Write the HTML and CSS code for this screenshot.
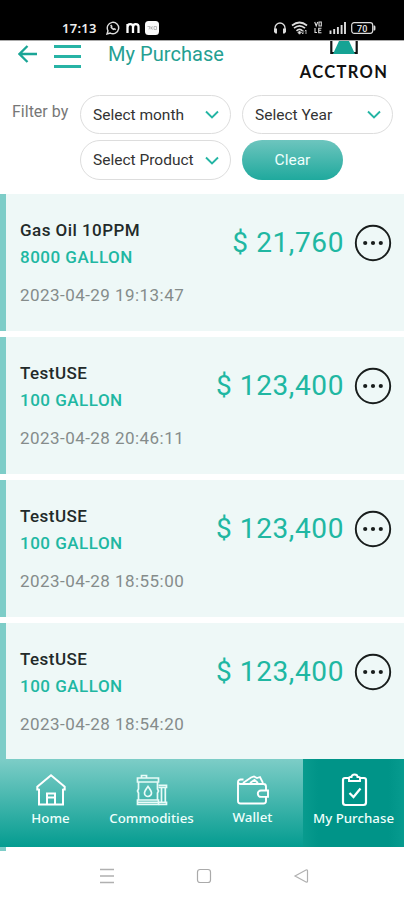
FILE: index.html
```html
<!DOCTYPE html>
<html lang="en">
<head>
<meta charset="utf-8">
<title>My Purchase</title>
<link rel="stylesheet" href="styles.css">
</head>
<body>
<div class="status">
  <span class="time">17:13</span>
  <svg class="whatsapp" width="14" height="14" viewBox="0 0 14 14"><path d="M1 13l1-3.200A5.700 5.700 0 1 1 4.200 12z" fill="none" stroke="#ddd" stroke-width="1.400"/><path d="M4.700 4l1 1.400-.5.8c.5 1 1.200 1.700 2.300 2.200l.8-.6 1.500.9" fill="none" stroke="#ddd" stroke-width="1.500"/></svg>
  <svg class="m-icon" width="14" height="12" viewBox="0 0 14 12"><path d="M1.500 11V2M1.500 5.500Q1.500 2.200 4.300 2.200T7 5V11M7 5.500Q7 2.200 9.800 2.200T12.500 5V11" fill="none" stroke="#fff" stroke-width="2.300"/></svg>
  <svg class="app-icon" width="14" height="14" viewBox="0 0 14 14"><rect width="14" height="14" rx="3.500" fill="#fafafa"/><path d="M2.500 5.500h2.500l-1 3M6 5.500v3M8 5.500L6 7l2 1.500M9 5.500h2.500v3H9z" fill="none" stroke="#aaa" stroke-width=".8"/></svg>
  <span class="spacer"></span>
  <svg class="phones" width="14" height="12" viewBox="0 0 14 12"><path d="M2 8V6a5 5 0 0 1 10 0v2" fill="none" stroke="#ddd" stroke-width="1.300"/><path d="M1 6.500h3v5H2.500L1 10zM10 6.500h3V10l-1.500 1.500H10z" fill="#ddd"/></svg>
  <svg class="wifi" width="17" height="14" viewBox="0 0 17 14"><path d="M1 4.500Q8.500-1.500 16 4.500M3 7.200Q8.500 2.500 14 7.200M5.500 9.800Q8.500 7 11.500 9.800" fill="none" stroke="#ddd" stroke-width="1.700"/><path d="M7 11.500l1.500-1.500 1.500 1.500-1.500 1.700zM12 9v4M10.500 11.500l1.500 1.500M15 13V9M13.800 10.200L15 9" fill="#ddd" stroke="#ddd" stroke-width=".8"/></svg>
  <svg class="volte" width="8" height="13" viewBox="0 0 8 13"><path d="M.7 1l1.500 4L3.700 1M5 1v4h2.300V1zM1 7v4.500h2M7.500 7.200H4.700v4.500h2.800M4.700 9.300h2.500" fill="none" stroke="#ddd" stroke-width="1.100"/></svg>
  <svg class="signal" width="17" height="12" viewBox="0 0 17 12"><path d="M1.500 8.500V12M5.200 7v5M8.900 5v7M12.600 3v9M16 0v12" stroke="#ddd" stroke-width="1.900"/></svg>
  <svg class="battery" width="25" height="12" viewBox="0 0 25 12"><rect x=".7" y=".7" width="21" height="10.600" rx="2.500" fill="none" stroke="#ddd" stroke-width="1.200"/><path d="M22.500 3.500h1.200q.8 0 .8 2.500t-.8 2.500h-1.200z" fill="#ddd"/><text class="charge" x="6" y="9.500">70</text></svg>
</div>

<header class="header">
  <svg class="back" width="20" height="18" viewBox="0 0 20 18"><path d="M9.500 1L1.500 9l8 8M2 9h17" fill="none" stroke="#1aa596" stroke-width="2.300"/></svg>
  <span class="burger"></span>
  <h1>My Purchase</h1>
  <div class="brand">
    <svg width="28" height="13" viewBox="0 0 28 13"><path d="M1.300 0v12h25.400V0" fill="none" stroke="#111" stroke-width="2.200"/><path d="M9 0h10l6 13H3z" fill="#16a394"/></svg>
    <span>ACCTRON</span>
  </div>
</header>

<section class="filters">
  <span class="label">Filter by</span>
  <div class="controls">
    <div class="select"><span>Select month</span><svg width="14" height="9" viewBox="0 0 14 9"><path d="M1 1.500l6 6 6-6" fill="none" stroke="#24b5a4" stroke-width="1.900"/></svg></div>
    <div class="select year"><span>Select Year</span><svg width="14" height="9" viewBox="0 0 14 9"><path d="M1 1.500l6 6 6-6" fill="none" stroke="#24b5a4" stroke-width="1.900"/></svg></div>
    <div class="select"><span>Select Product</span><svg width="14" height="9" viewBox="0 0 14 9"><path d="M1 1.500l6 6 6-6" fill="none" stroke="#24b5a4" stroke-width="1.900"/></svg></div>
    <button class="clear">Clear</button>
  </div>
</section>

<main class="list">
  <article class="card">
    <div class="info"><div class="name">Gas Oil 10PPM</div><div class="qty">8000 GALLON</div><div class="date">2023-04-29 19:13:47</div></div>
    <div class="price">$ 21,760</div>
    <svg class="more" width="38" height="38" viewBox="0 0 38 38"><circle cx="19" cy="19" r="17.200" fill="none" stroke="#181d1c" stroke-width="1.900"/><g fill="#181d1c"><circle cx="11.200" cy="19" r="2.100"/><circle cx="19" cy="19" r="2.100"/><circle cx="26.800" cy="19" r="2.100"/></g></svg>
  </article>
  <article class="card">
    <div class="info"><div class="name">TestUSE</div><div class="qty">100 GALLON</div><div class="date">2023-04-28 20:46:11</div></div>
    <div class="price">$ 123,400</div>
    <svg class="more" width="38" height="38" viewBox="0 0 38 38"><circle cx="19" cy="19" r="17.200" fill="none" stroke="#181d1c" stroke-width="1.900"/><g fill="#181d1c"><circle cx="11.200" cy="19" r="2.100"/><circle cx="19" cy="19" r="2.100"/><circle cx="26.800" cy="19" r="2.100"/></g></svg>
  </article>
  <article class="card">
    <div class="info"><div class="name">TestUSE</div><div class="qty">100 GALLON</div><div class="date">2023-04-28 18:55:00</div></div>
    <div class="price">$ 123,400</div>
    <svg class="more" width="38" height="38" viewBox="0 0 38 38"><circle cx="19" cy="19" r="17.200" fill="none" stroke="#181d1c" stroke-width="1.900"/><g fill="#181d1c"><circle cx="11.200" cy="19" r="2.100"/><circle cx="19" cy="19" r="2.100"/><circle cx="26.800" cy="19" r="2.100"/></g></svg>
  </article>
  <article class="card">
    <div class="info"><div class="name">TestUSE</div><div class="qty">100 GALLON</div><div class="date">2023-04-28 18:54:20</div></div>
    <div class="price">$ 123,400</div>
    <svg class="more" width="38" height="38" viewBox="0 0 38 38"><circle cx="19" cy="19" r="17.200" fill="none" stroke="#181d1c" stroke-width="1.900"/><g fill="#181d1c"><circle cx="11.200" cy="19" r="2.100"/><circle cx="19" cy="19" r="2.100"/><circle cx="26.800" cy="19" r="2.100"/></g></svg>
  </article>
</main>

<nav class="tabs">
  <a class="tab"><svg width="32" height="34" viewBox="0 0 32 34"><path d="M4 16v15.500h24V16M12 31V20.500h8V31M12 24.500h8M4.500 16.500H2.300v-2.700L16 2.300l13.700 11.500v2.700h-2.200" fill="none" stroke="#fff" stroke-width="2"/></svg><span>Home</span></a>
  <a class="tab"><svg width="32" height="34" viewBox="0 0 32 34"><g fill="none" stroke="#e8fbf8" stroke-width="1.700"><path d="M1.500 5h21v4h-21zM2.500 9v7l-1 2 1 2v7M21.500 9v7l1 2-1 2v7M1.500 27h21v4.500h-21zM1.500 29.300h21M5.500 5V2.500h5V5"/><path d="M12 13.500q-3.500 4.500-3.500 6.500a3.500 3.500 0 0 0 7 0q0-2-3.500-6.500z"/><path d="M22.500 12.300h8v2.200h-8M29.300 14.500V29M25.500 14.500V29M22.500 29.300h8v2.200h-8"/></g></svg><span>Commodities</span></a>
  <a class="tab wallet"><svg width="32" height="34" viewBox="0 0 32 34"><g fill="none" stroke="#fff" stroke-width="1.900"><path d="M29 17.500v-4q0-2.500-2.500-2.500H3.500Q1 11 1 9t2.500-2.500h3M1 9v19q0 2.500 2.500 2.500h23q2.500 0 2.500-2.500v-4"/><path d="M31 17.500h-7a3.200 3.200 0 0 0 0 6.400h7z"/><path d="M6 10l8-5.500 3-1 3 1.500 3-1 3 6M13 10l4.500-3 3.500 3" stroke-width="1.800"/></g></svg><span>Wallet</span></a>
  <a class="tab active"><svg width="32" height="34" viewBox="0 0 32 34"><g fill="none" stroke="#fff" stroke-width="2.200"><path d="M11 5H7Q5 5 5 7v22.500q0 2.500 2.500 2.500h18q2.500 0 2.500-2.500V7q0-2-2-2h-4"/><path d="M11 8V5q0-1 1.500-1h1q0-2.500 3-2.500t3 2.500h1Q22 4 22 5v3z" stroke-width="1.900"/><path d="M11.500 20l4 4 7-8.500"/></g></svg><span>My Purchase</span></a>
</nav>

<footer class="system">
  <svg width="16" height="16" viewBox="0 0 16 16"><path d="M1 1.500h14M1 8h14M1 14.500h14" stroke="#b0b0b0" stroke-width="1.300"/></svg>
  <svg width="16" height="16" viewBox="0 0 16 16"><rect x="1.500" y="1.500" width="13" height="13" rx="2.500" fill="none" stroke="#aaa" stroke-width="1.200"/></svg>
  <svg width="16" height="16" viewBox="0 0 16 16"><path d="M2 8L13 2q1.500-.5 1.500 1v10q0 1.500-1.500 1z" fill="none" stroke="#b0b0b0" stroke-width="1.200"/></svg>
</footer>
</body>
</html>
```
FILE: styles.css
```css
* { box-sizing: border-box; }
body { margin: 0; width: 404px; height: 900px; overflow: hidden; background: #fff; font-family: Roboto, "Liberation Sans", sans-serif; }
svg { display: block; flex: none; }

.status { display: flex; align-items: center; height: 40px; padding: 15px 28px 0 62px; background: #000; }
.time { width: 44px; font: 600 13px/16px "Noto Sans", sans-serif; letter-spacing: .3px; color: #eee; white-space: nowrap; }
.m-icon { margin-left: 6px; }
.app-icon { margin-left: 5px; }
.spacer { flex: 1; }
.wifi { margin-left: 4px; }
.volte { margin-left: 6px; }
.signal { margin-left: 7px; }
.battery { margin-left: 5px; }
.charge { font: 600 9px Roboto, sans-serif; fill: #ddd; }

.header { display: flex; height: 50px; padding-left: 18px; border-top: 1px solid #aaa; }
.back { margin-top: 4px; }
.burger { width: 27px; height: 23px; margin: 4px 0 0 16px; border-top: 3px solid #27b3a5; border-bottom: 3px solid #27b3a5; background: linear-gradient(#27b3a5, #27b3a5) center / 100% 3px no-repeat; }
h1 { width: 190px; margin: 0 0 0 27px; font-size: 20px; line-height: 27px; font-weight: 400; letter-spacing: .05px; color: #259f92; white-space: nowrap; }
.brand { display: flex; flex-direction: column; align-items: center; width: 92px; }
.brand span { margin-top: 7px; font: 700 16.500px/22px Lato, sans-serif; letter-spacing: 1.350px; color: #111; white-space: nowrap; }

.filters { display: flex; height: 104px; padding: 5px 11px 0 12px; }
.label { width: 68px; padding-top: 8px; font-size: 16px; line-height: 18px; color: #777; white-space: nowrap; }
.controls { display: grid; grid-template-columns: 151px 151px; grid-template-rows: 39px 40px; gap: 6px 11px; flex: none; }
.select { display: flex; align-items: center; justify-content: space-between; padding: 0 11px 0 12px; border: 1px solid #ddd; border-radius: 20px; background: #fff; font-size: 15.500px; letter-spacing: 0; color: #333; white-space: nowrap; }
.clear { width: 101px; padding: 0 0 1px; border: 0; border-radius: 20px; background: linear-gradient(#6dc5be, #1fa99d); font: 400 15.500px Roboto, sans-serif; color: #effffd; }

.list { display: flex; flex-direction: column; gap: 6px; height: 565px; overflow: hidden; }
.card { display: flex; flex: none; height: 137px; padding: 23px 12px 0 14px; border-left: 6px solid #7dcdc8; background: #eef8f7; }
.info { flex: 1; white-space: nowrap; font-size: 17px; line-height: 27px; }
.name { font-weight: 500; letter-spacing: .45px; color: #222a29; }
.qty { font-weight: 500; letter-spacing: .5px; color: #20b7a2; }
.date { margin-top: 11px; letter-spacing: .45px; color: #858c8b; }
.price { margin-top: 9px; font-size: 28px; line-height: 34px; letter-spacing: .6px; color: #20b7a2; white-space: nowrap; }
.more { margin: 7px 0 0 10px; }

.tabs { display: grid; grid-template-columns: repeat(4, 1fr); height: 88px; background: linear-gradient(#7dcdc7, #049c90); }
.tab { display: flex; flex-direction: column; align-items: center; padding-top: 14px; color: #eefffc; font: 500 13.300px/20px "Noto Sans", sans-serif; white-space: nowrap; }
.tab span { margin-top: 1px; }
.wallet span { margin-top: 0; }
.active { background: linear-gradient(90deg, #089b8e, #009488 15%, #009488 85%, #079b8f); }

.system { display: flex; justify-content: center; gap: 81px; height: 53px; padding: 21px 0 0 4px; background: linear-gradient(#7dcdc8, #7dcdc8) 0 0 / 6px 4px no-repeat #fff; }
```
